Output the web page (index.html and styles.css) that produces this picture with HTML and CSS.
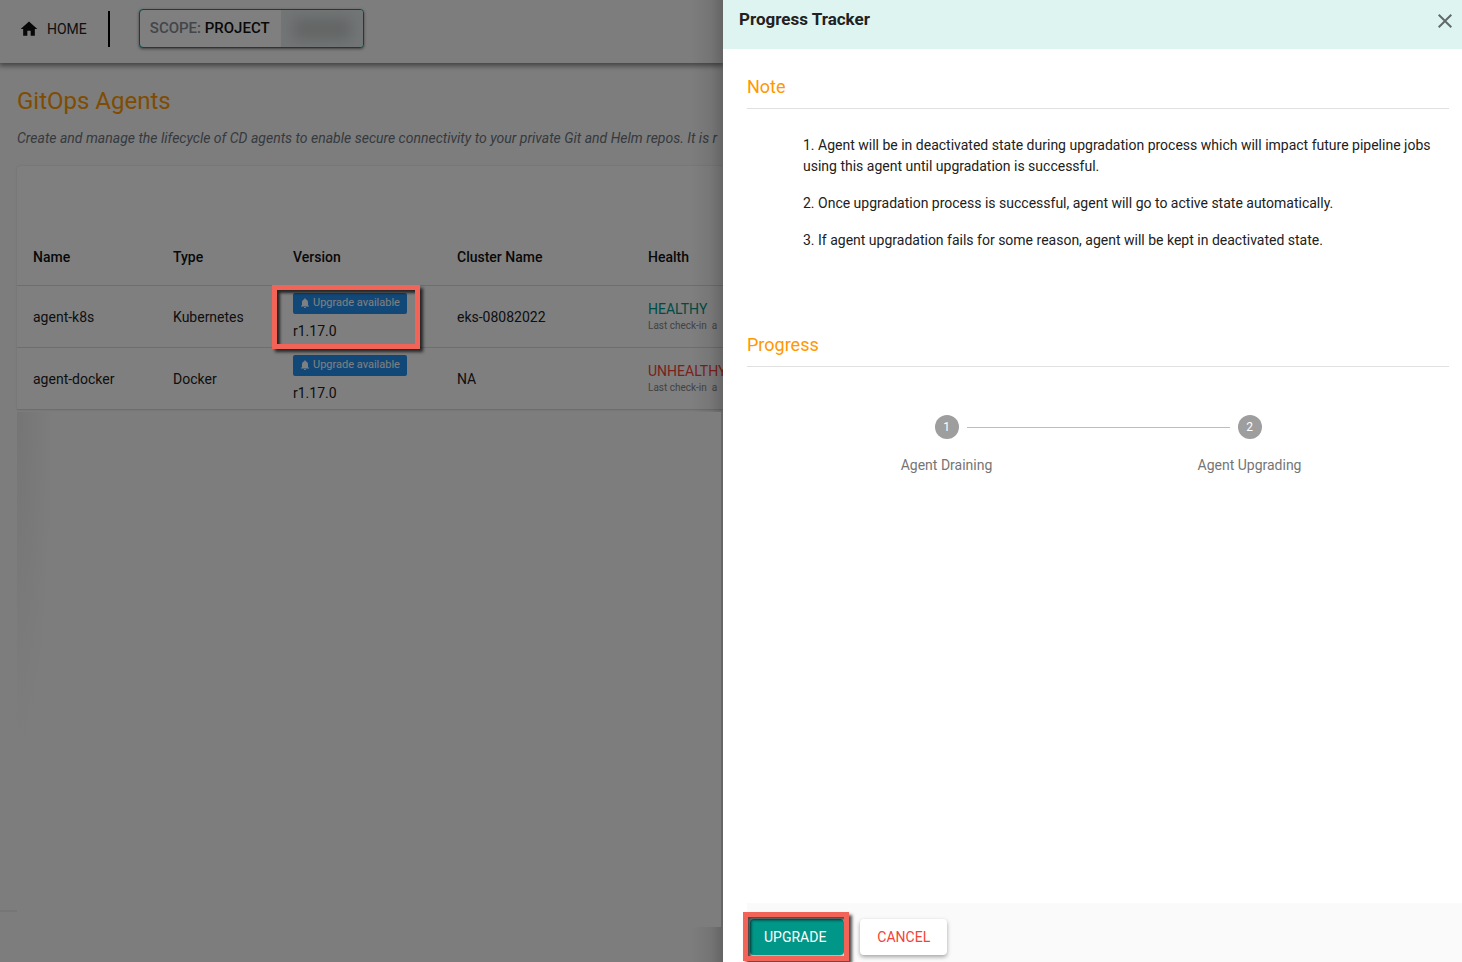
FILE: index.html
```html
<!DOCTYPE html>
<html lang="en">
<head>
<meta charset="utf-8">
<title>GitOps Agents</title>
<link rel="stylesheet" href="styles.css">
</head>
<body>
<div class="shell">
  <div class="page">
    <header class="appbar">
      <a class="home" href="#"><svg class="home-icon" viewBox="0 0 24 24" aria-hidden="true"><path d="M10 20v-6h4v6h5v-8h3L12 3 2 12h3v8z"/></svg>HOME</a>
      <button class="scope" type="button"><span class="scope-label">SCOPE: <b>PROJECT</b></span><span class="scope-value"><span class="scope-blur"></span></span></button>
    </header>
    <main class="content">
      <h1 class="page-title">GitOps Agents</h1>
      <p class="page-intro">Create and manage the lifecycle of CD agents to enable secure connectivity to your private Git and Helm repos. It is r</p>
      <section class="card">
        <table class="agents">
          <colgroup><col class="col-name"><col class="col-type"><col class="col-version"><col class="col-cluster"><col class="col-health"></colgroup>
          <thead><tr><th scope="col">Name</th><th scope="col">Type</th><th scope="col">Version</th><th scope="col">Cluster Name</th><th scope="col">Health</th></tr></thead>
          <tbody>
            <tr>
              <td>agent-k8s</td><td>Kubernetes</td>
              <td><div class="version"><button class="badge" type="button"><svg class="bell" viewBox="4 2 16 20" aria-hidden="true"><path d="M12 22c1.100 0 2-.9 2-2h-4c0 1.100.9 2 2 2zm6-6v-5c0-3.070-1.640-5.640-4.500-6.320V4c0-.83-.67-1.500-1.500-1.500s-1.500.67-1.500 1.500v.68C7.630 5.360 6 7.920 6 11v5l-2 2v1h16v-1l-2-2z"/></svg>Upgrade available</button><span>r1.17.0</span><span class="callout callout-version"></span></div></td>
              <td>eks-08082022</td>
              <td><div class="health healthy">HEALTHY</div><div class="checkin">Last check-in &nbsp;a</div></td>
            </tr>
            <tr>
              <td>agent-docker</td><td>Docker</td>
              <td><div class="version"><button class="badge" type="button"><svg class="bell" viewBox="4 2 16 20" aria-hidden="true"><path d="M12 22c1.100 0 2-.9 2-2h-4c0 1.100.9 2 2 2zm6-6v-5c0-3.070-1.640-5.640-4.500-6.320V4c0-.83-.67-1.500-1.500-1.500s-1.500.67-1.500 1.500v.68C7.630 5.360 6 7.920 6 11v5l-2 2v1h16v-1l-2-2z"/></svg>Upgrade available</button><span>r1.17.0</span></div></td>
              <td>NA</td>
              <td><div class="health unhealthy">UNHEALTHY</div><div class="checkin">Last check-in &nbsp;a</div></td>
            </tr>
          </tbody>
        </table>
      </section>
      <div class="blank"></div>
    </main>
    <div class="scrim"></div>
  </div>
  <aside class="drawer" aria-labelledby="drawer-title">
    <header class="drawer-head">
      <h2 class="drawer-title" id="drawer-title">Progress Tracker</h2>
      <button class="close" type="button" aria-label="Close"><svg viewBox="0 0 24 24" aria-hidden="true"><path d="M19 6.410L17.590 5 12 10.590 6.410 5 5 6.410 10.590 12 5 17.590 6.410 19 12 13.410 17.590 19 19 17.590 13.410 12z"/></svg></button>
    </header>
    <div class="drawer-body">
      <section class="note">
        <h3 class="section-title">Note</h3>
        <div class="note-list">
          <p>1. Agent will be in deactivated state during upgradation process which will impact future pipeline jobs using this agent until upgradation is successful.</p>
          <p>2. Once upgradation process is successful, agent will go to active state automatically.</p>
          <p>3. If agent upgradation fails for some reason, agent will be kept in deactivated state.</p>
        </div>
      </section>
      <section>
        <h3 class="section-title">Progress</h3>
        <ol class="stepper">
          <li class="step"><span class="step-dot">1</span><span>Agent Draining</span></li>
          <li class="step"><span class="step-dot">2</span><span>Agent Upgrading</span></li>
        </ol>
      </section>
    </div>
    <footer class="drawer-foot">
      <div class="primary-wrap"><button class="btn btn-primary" type="button">UPGRADE</button><span class="callout callout-upgrade"></span></div>
      <button class="btn btn-cancel" type="button">CANCEL</button>
    </footer>
  </aside>
</div>
</body>
</html>
```
FILE: styles.css
```css
* { box-sizing: border-box; }
body { margin: 0; font-family: Roboto, "Liberation Sans", sans-serif; font-size: 14px; color: #212121; }
button { font: inherit; cursor: pointer; }
h1, h2, h3, p { margin: 0; }

.shell { display: grid; grid-template-columns: minmax(0, 1fr) calc(50% + 8px); min-height: 100vh; }

/* Page behind the drawer */
.page { position: relative; display: flex; flex-direction: column; overflow: hidden; background: #fafafa; }
.appbar { display: flex; align-items: center; height: 63px; padding: 0 19px 6px; background: #fafafa; box-shadow: 0 2px 5px 1px rgba(0, 0, 0, .45); }
.home { display: flex; align-items: center; gap: 8px; height: 36px; padding-right: 21px; border-right: 2px solid #000; color: #212121; text-decoration: none; }
.home-icon { width: 20px; height: 20px; fill: #111; }
.scope { display: flex; height: 39px; margin-left: 29px; padding: 0; border: 1px solid #009688; border-radius: 4px; background: #fff; box-shadow: 0 1px 3px rgba(0, 0, 0, .5); font-size: 15px; overflow: hidden; }
.scope-label { padding: 0 11px 0 10px; line-height: 37px; font-weight: 500; color: #858b93; }
.scope-label b { font-weight: 500; color: #111; }
.scope-value { width: 82px; height: 37px; padding: 8px 12px; background: #e6ecec; }
.scope-blur { display: block; height: 22px; background: #c6cbca; filter: blur(7px); }

.content { flex: 1; display: flex; flex-direction: column; padding: 24px 0 0 17px; }
.page-title { font-size: 24px; line-height: 28px; font-weight: 400; color: #ff9800; }
.page-intro { margin-top: 13px; line-height: 20px; font-style: italic; white-space: nowrap; color: #6c757d; }
.card { margin-top: 18px; padding-top: 63px; background: #fff; border-radius: 4px 0 0; box-shadow: 0 0 2px rgba(0, 0, 0, .15); }
.agents { width: 745px; border-collapse: separate; border-spacing: 0; table-layout: fixed; }
.col-name { width: 140px; }
.col-type { width: 120px; }
.col-version { width: 164px; }
.col-cluster { width: 191px; }
.agents th, .agents td { padding: 0 0 0 16px; text-align: left; border-bottom: 1px solid #dcdcdc; white-space: nowrap; }
.agents th { height: 57px; font-weight: 500; color: #111; }
.agents td { height: 62px; }
.version { position: relative; display: flex; flex-direction: column; align-items: flex-start; gap: 7px; line-height: 20px; }
.badge { display: flex; align-items: center; gap: 4px; height: 21px; padding: 0 7px 0 8px; border: 0; border-radius: 2px; background: #2490f0; color: #fff; font-size: 11px; }
.bell { width: 8px; height: 10px; fill: #fff; }
.health { line-height: 18px; }
.healthy { color: #009688; }
.unhealthy { color: #f44336; }
.checkin { line-height: 16px; font-size: 10px; color: #858585; }
.blank { z-index: 3; flex: 1; margin: 2px 2px 35px 0; background: radial-gradient(ellipse 36px 340px at 0 0, #757575, #7d7d7d) #7d7d7d; }
.content::after { content: ""; position: absolute; left: 0; bottom: 50px; width: 17px; height: 2px; background: #ededed; }
.scrim { position: absolute; inset: 0; z-index: 2; background: linear-gradient(to left, rgba(0, 0, 0, .2), rgba(0, 0, 0, .07) 12px, rgba(0, 0, 0, 0) 32px), rgba(0, 0, 0, .5); }

/* Callouts drawn over the content */
.callout { position: absolute; z-index: 4; border: 5px solid #f26457; box-shadow: 3px 3px 3px rgba(0, 0, 0, .7), inset 3px 3px 3px rgba(0, 0, 0, .7); pointer-events: none; }
.callout-version { inset: -8px auto -8px -21px; width: 148px; }
.callout-upgrade { inset: -7px -5px -6px -7px; }

/* Drawer */
.drawer { display: flex; flex-direction: column; background: #fff; }
.drawer-head { display: flex; justify-content: space-between; align-items: flex-start; height: 49px; padding: 9px 5px 0 16px; background: #def4f0; }
.drawer-title { font-size: 17px; line-height: 20px; font-weight: 700; }
.close { width: 24px; height: 24px; padding: 0; border: 0; background: none; }
.close svg { display: block; width: 24px; height: 24px; fill: #5f6b69; }
.drawer-body { flex: 1; padding: 24px 13px 0 24px; }
.section-title { padding-bottom: 8px; border-bottom: 1px solid #e0e0e0; font-size: 18px; line-height: 27px; font-weight: 400; color: #ff9800; }
.note-list { padding: 26px 16px 80px 56px; }
.note-list p { line-height: 21px; }
.note-list p + p { margin-top: 16px; }
.stepper { display: flex; margin: 0; padding: 48px 48px 0; list-style: none; }
.step { position: relative; flex: 1; display: flex; flex-direction: column; align-items: center; gap: 16px; line-height: 20px; color: #757575; }
.step-dot { display: grid; place-items: center; width: 24px; height: 24px; border-radius: 50%; background: #9e9e9e; color: #fff; font-size: 12px; }
.step + .step::before { content: ""; position: absolute; top: 12px; left: calc(-50% + 20px); right: calc(50% + 20px); border-top: 1px solid #bdbdbd; }
.drawer-foot { display: flex; align-items: flex-start; gap: 16px; height: 59px; margin-left: 24px; padding: 16px 3px 0; background: #fafafa; }
.primary-wrap { position: relative; }
.btn { height: 36px; padding: 0 17px; border: 0; border-radius: 4px; box-shadow: 0 2px 4px rgba(0, 0, 0, .35); }
.primary-wrap .btn { display: block; padding: 0 18px 0 14px; }
.btn-primary { background: #009688; color: #fff; }
.btn-cancel { background: #fff; color: #f44336; }
```
